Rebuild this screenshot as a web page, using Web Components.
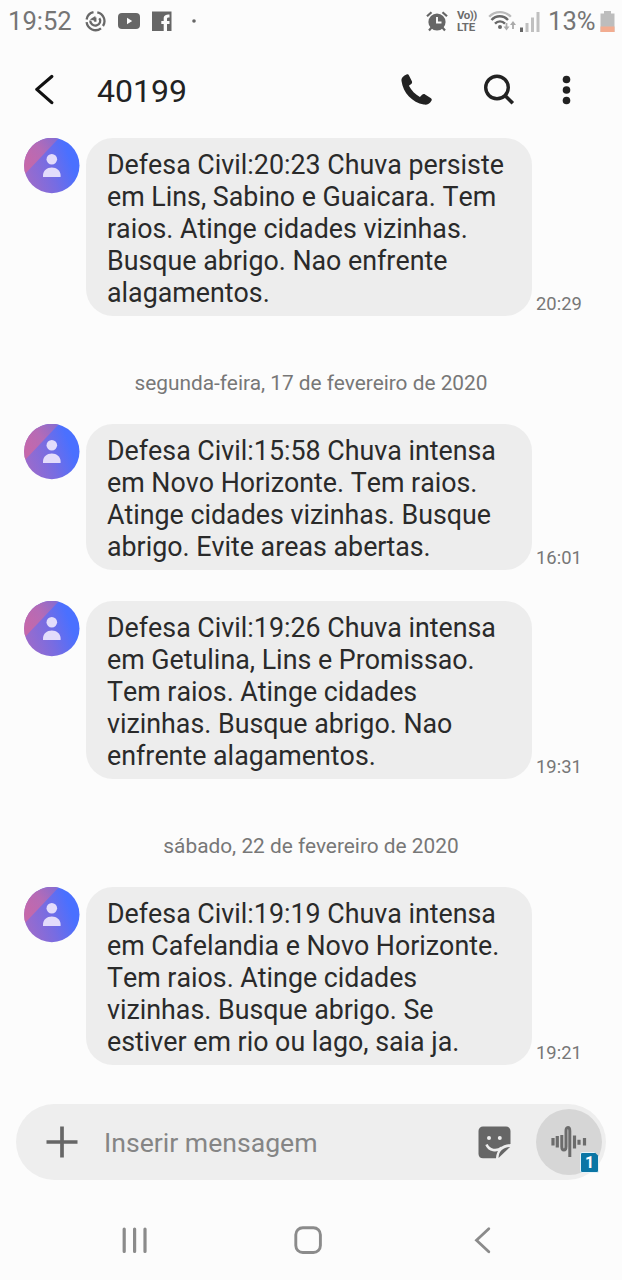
<!DOCTYPE html>
<html lang="pt-BR">
<head>
<meta charset="utf-8">
<title>40199</title>
<style>
  body {
    margin: 0;
    background: #fcfcfc;
    font-family: Roboto, "Liberation Sans", sans-serif;
  }
</style>
</head>
<body>
<phone-screen>
  <status-bar slot="status"></status-bar>
  <chat-header slot="header">40199</chat-header>

  <chat-message time="20:29">Defesa Civil:20:23 Chuva persiste<br>em Lins, Sabino e Guaicara. Tem<br>raios. Atinge cidades vizinhas.<br>Busque abrigo. Nao enfrente<br>alagamentos.</chat-message>
  <date-divider>segunda-feira, 17 de fevereiro de 2020</date-divider>
  <chat-message time="16:01">Defesa Civil:15:58 Chuva intensa<br>em Novo Horizonte. Tem raios.<br>Atinge cidades vizinhas. Busque<br>abrigo. Evite areas abertas.</chat-message>
  <chat-message time="19:31" class="next">Defesa Civil:19:26 Chuva intensa<br>em Getulina, Lins e Promissao.<br>Tem raios. Atinge cidades<br>vizinhas. Busque abrigo. Nao<br>enfrente alagamentos.</chat-message>
  <date-divider>sábado, 22 de fevereiro de 2020</date-divider>
  <chat-message time="19:21">Defesa Civil:19:19 Chuva intensa<br>em Cafelandia e Novo Horizonte.<br>Tem raios. Atinge cidades<br>vizinhas. Busque abrigo. Se<br>estiver em rio ou lago, saia ja.</chat-message>

  <message-composer slot="composer">Inserir mensagem</message-composer>
  <nav-bar slot="nav"></nav-bar>
</phone-screen>

<script>
class PhoneScreen extends HTMLElement {
  constructor() {
    super();
    this.attachShadow({ mode: "open" });
    this.shadowRoot.innerHTML = `
      <style>
        :host {
          display: flex;
          flex-direction: column;
          width: 622px;
          height: 1280px;
          overflow: hidden;
          background: #fcfcfc;
        }
        main {
          flex: 1;
          display: flex;
          flex-direction: column;
        }
      </style>
      <slot name="status"></slot>
      <slot name="header"></slot>
      <main><slot></slot></main>
      <slot name="composer"></slot>
      <slot name="nav"></slot>
    `;
  }
}

class StatusBar extends HTMLElement {
  constructor() {
    super();
    this.attachShadow({ mode: "open" });
    this.shadowRoot.innerHTML = `
      <style>
        :host {
          display: flex;
          align-items: center;
          justify-content: space-between;
          height: 42px;
          padding: 0 7px 0 8px;
          box-sizing: border-box;
          color: #757575;
          font-size: 25.6px;
          line-height: 44px;
        }
        .group { display: flex; align-items: center; }
        svg { display: block; }
        .clock { width: 77px; }
        .volte {
          display: flex;
          flex-direction: column;
          width: 23px;
          margin-left: 9px;
          font-size: 11.5px;
          font-weight: 700;
          line-height: 12px;
          letter-spacing: -0.2px;
          color: #6c6c6c;
        }
        .volte .vo { letter-spacing: -0.5px; }
        .percent { width: 52px; margin-left: 8px; white-space: nowrap; }
      </style>
      <div class="group">
        <span class="clock">19:52</span>
        <svg width="21" height="22" viewBox="0 0 21 22" fill="none" stroke="#686868" stroke-width="2.3">
          <path d="M8.500 2.200A9 9 0 0 0 1.600 9.500M1.600 12.200A9 9 0 0 0 16 18.300M18 16A9 9 0 0 0 12.300 2.300"/>
          <path d="M5.300 10.500a5 4.600 0 1 0 9-2.300M10.300 11.800V7.500"/>
          <path d="M4.800 9.500l5.500-3.500.5 5z" fill="#686868" stroke="none"/>
        </svg>
        <svg width="22" height="16" viewBox="0 0 22 16" style="margin-left:12px">
          <rect width="22" height="16" rx="4" fill="#666"/>
          <path d="M9 4.800v6.400l5.200-3.200z" fill="#fff"/>
        </svg>
        <svg width="20" height="20" viewBox="0 0 20 20" style="margin-left:12px">
          <path d="M0 .5h19.500V20H15v-7h2.500v-3H15V8c0-1.200.5-1.500 2.500-1.500v-3c-4 0-5.800 1-5.800 4V10H9.300v3h2.400v7H0z" fill="#666"/>
        </svg>
        <svg width="4" height="4" viewBox="0 0 4 4" style="margin-left:20px"><circle cx="2" cy="2" r="1.8" fill="#666"/></svg>
      </div>
      <div class="group">
        <svg width="22" height="21" viewBox="0 0 22 21">
          <circle cx="11" cy="11" r="8.600" fill="#666"/>
          <path d="M1 5.300L5.500 1.200M21 5.300l-4.500-4.100M5.600 16.500l-2.600 3M16.400 16.500l2.600 3" stroke="#666" stroke-width="2.200"/>
          <path d="M11 6v5.500h4.500" fill="none" stroke="#fcfcfc" stroke-width="1.900"/>
        </svg>
        <div class="volte"><span class="vo">Vo))</span><span>LTE</span></div>
        <svg width="28" height="22" viewBox="0 0 28 22" fill="none" style="margin-left:8px">
          <path d="M1.200 6.800C7 .5 17 .5 22.800 6.800" stroke="#bbb" stroke-width="2.400"/>
          <path d="M3.500 10c4.500-5 12-5 16.500 0M7 13.600c2.800-3 7.200-3 10 0" stroke="#686868" stroke-width="2.400"/>
          <circle cx="12" cy="17" r="2" fill="#686868"/>
          <path d="M18.500 13v5M25 19v-5" stroke="#aaa" stroke-width="1.800"/>
          <path d="M15.500 16.500h6l-3 4zM22 15h6l-3-4z" fill="#aaa"/>
        </svg>
        <svg width="20" height="21" viewBox="0 0 20 21" style="margin-left:4px">
          <path d="M0 16.500h3V21H0z" fill="#666"/>
          <path d="M5.500 12h3v9h-3zM11 6.500h3V21h-3zM16.500 1h3v20h-3z" fill="#c0c0c0"/>
        </svg>
        <span class="percent">13%</span>
        <svg width="15" height="21" viewBox="0 0 15 21">
          <path d="M4 0h7v2.500h3.500V21H.5V2.500H4z" fill="#bdbdbd"/>
          <path d="M.5 15.500h14V21H.5z" fill="#f2ac90"/>
        </svg>
      </div>
    `;
  }
}

class ChatHeader extends HTMLElement {
  constructor() {
    super();
    this.attachShadow({ mode: "open" });
    this.shadowRoot.innerHTML = `
      <style>
        :host {
          display: flex;
          align-items: center;
          height: 96px;
          padding: 0 50px 0 34px;
          box-sizing: border-box;
          color: #222;
        }
        svg { display: block; }
        .title {
          flex: 1;
          margin-left: 43px;
          font-size: 32px;
          line-height: 38px;
          padding-top: 2px;
        }
        .actions { display: flex; align-items: center; }
      </style>
      <svg width="20" height="32" viewBox="0 0 20 32" fill="none" stroke="#111" stroke-width="3.200" stroke-linecap="round" stroke-linejoin="round">
        <path d="M17.800 2.500L2.800 15.400l15 13.200"/>
      </svg>
      <span class="title"><slot></slot></span>
      <div class="actions">
        <svg width="32" height="32" viewBox="0 0 32 32" fill="#222">
          <path d="M6.200 1.200C3.500 2.500.800 4.500 1.200 7.500 2.800 19.500 12 28.800 23.500 31.200c3 .6 5.700-.5 7.800-4.200.5-1-.1-1.700-1-2.300l-5.500-3.700c-1-.6-2.200-.4-3 .4l-2.200 2.200C15 21.200 11 17 8.600 12.400l2.300-1.800c.9-.7 1.100-1.700.7-2.800L8.700 2C8.200 1 7.400.7 6.200 1.200z" transform="translate(-.7 -.6)"/>
        </svg>
        <svg width="32" height="32" viewBox="0 0 32 32" fill="none" stroke="#222" style="margin-left:50px">
          <circle cx="14" cy="13.500" r="11.300" stroke-width="3.400"/>
          <path d="M21.500 21l8.300 8.300" stroke-width="3.600"/>
        </svg>
        <svg width="10" height="32" viewBox="0 0 10 32" fill="#222" style="margin-left:47px">
          <circle cx="4.500" cy="5.500" r="3.800"/><circle cx="4.500" cy="16" r="3.800"/><circle cx="4.500" cy="26.500" r="3.800"/>
        </svg>
      </div>
    `;
  }
}

class ChatMessage extends HTMLElement {
  constructor() {
    super();
    this.attachShadow({ mode: "open" });
    this.shadowRoot.innerHTML = `
      <style>
        :host {
          display: flex;
          align-items: flex-start;
          padding-left: 24px;
        }
        :host(.next) { margin-top: 31px; }
        .avatar { display: block; width: 56px; height: 56px; flex: none; }
        .bubble {
          width: 446px;
          margin-left: 6px;
          padding: 11px 0 7px 21px;
          box-sizing: border-box;
          border-radius: 27px;
          background: #ededed;
          color: #2a2a2a;
          font-size: 26.8px;
          font-kerning: none;
          line-height: 32px;
          white-space: nowrap;
        }
        time {
          align-self: flex-end;
          margin-left: 4px;
          font-size: 18.4px;
          line-height: 25px;
          color: #777;
        }
      </style>
      <svg class="avatar" viewBox="0 0 56 56">
        <defs>
          <linearGradient id="base" x1="0" y1=".75" x2=".85" y2=".45">
            <stop offset="0" stop-color="#a06bc8"/>
            <stop offset=".55" stop-color="#776ce2"/>
            <stop offset="1" stop-color="#4a70ff"/>
          </linearGradient>
          <linearGradient id="edge" gradientUnits="userSpaceOnUse" x1="3" y1="26" x2="34" y2="5">
            <stop offset="0" stop-color="#c568aa"/>
            <stop offset=".5" stop-color="#b56bb6"/>
            <stop offset="1" stop-color="#8a6cce"/>
          </linearGradient>
          <clipPath id="disc"><circle cx="27.800" cy="27.500" r="27.700"/></clipPath>
        </defs>
        <g clip-path="url(#disc)">
          <path d="M0 0h56v56H0z" fill="url(#base)"/>
          <path d="M0 0h35L0 37z" fill="url(#edge)"/>
        </g>
        <circle cx="27.800" cy="21.300" r="5.300" fill="#e3dcfb"/>
        <path d="M19 39v-1.500c0-5 4-8 8.800-8s8.800 3 8.800 8V39z" fill="#e3dcfb"/>
      </svg>
      <div class="bubble"><slot></slot></div>
      <time></time>
    `;
  }

  connectedCallback() {
    this.shadowRoot.querySelector("time").textContent = this.getAttribute("time");
  }
}

class DateDivider extends HTMLElement {
  constructor() {
    super();
    this.attachShadow({ mode: "open" });
    this.shadowRoot.innerHTML = `
      <style>
        :host {
          display: block;
          height: 108px;
          padding-top: 55px;
          box-sizing: border-box;
          text-align: center;
          font-size: 20.85px;
          line-height: 24px;
          color: #777;
        }
      </style>
      <slot></slot>
    `;
  }
}

class MessageComposer extends HTMLElement {
  constructor() {
    super();
    this.attachShadow({ mode: "open" });
    this.shadowRoot.innerHTML = `
      <style>
        :host {
          display: flex;
          align-items: center;
          height: 76px;
          margin: 0 16px;
          padding: 0 4px 0 30px;
          box-sizing: border-box;
          border-radius: 38px;
          background: #eee;
        }
        svg { display: block; }
        .placeholder {
          flex: 1;
          margin-left: 26px;
          padding-top: 2px;
          font-size: 26.6px;
          line-height: 32px;
          color: #858585;
        }
        .voice {
          position: relative;
          display: flex;
          align-items: center;
          justify-content: center;
          width: 66px;
          height: 66px;
          margin-left: 25px;
          border-radius: 50%;
          background: #d6d6d6;
        }
        .sim {
          position: absolute;
          left: 44px;
          top: 43px;
          width: 17px;
          height: 19px;
          border: 1px solid #e6f2f8;
          background: #0b76a5;
          border-radius: 2px;
          clip-path: polygon(0 0, 76% 0, 100% 22%, 100% 100%, 0 100%);
          color: #fff;
          font-size: 16px;
          font-weight: 700;
          line-height: 20px;
          text-align: center;
        }
      </style>
      <svg width="32" height="32" viewBox="0 0 32 32" stroke="#666" stroke-width="3.700">
        <path d="M16 .5v31M.5 16h31"/>
      </svg>
      <span class="placeholder"><slot></slot></span>
      <svg width="33" height="33" viewBox="0 0 33 33">
        <path d="M5 .5h23a4.500 4.500 0 0 1 4.500 4.500v13c-5 .5-8 1.500-10.500 4.200-2.500 2.600-3.800 6-4 10H5A4.500 4.500 0 0 1 .5 28V5A4.500 4.500 0 0 1 5 .5z" fill="#666"/>
        <circle cx="11" cy="12" r="2" fill="#eee"/><circle cx="21.800" cy="12" r="2" fill="#eee"/>
        <path d="M8.500 18.500c2.500 6 10 7.500 15.500 3" fill="none" stroke="#eee" stroke-width="2.600"/>
        <path d="M20.500 32c.2-6.500 4-10.500 11.500-11z" fill="#666"/>
      </svg>
      <div class="voice">
        <svg width="36" height="34" viewBox="0 0 36 34" fill="none" stroke="#6c6c6c" stroke-width="3.200">
          <path d="M2 13v7.500M6.300 11v11.500M23.500 10.500v13M28 14.800v5M33.500 13v7.500"/>
          <path d="M10.800 10v11.500c0 4.800 4.200 4.800 4.200 0V6c0-4.800 3.800-4.800 3.800 0v26" stroke-width="3"/>
        </svg>
        <div class="sim">1</div>
      </div>
    `;
  }
}

class NavBar extends HTMLElement {
  constructor() {
    super();
    this.attachShadow({ mode: "open" });
    this.shadowRoot.innerHTML = `
      <style>
        :host {
          display: flex;
          align-items: center;
          height: 100px;
          padding: 20px 0 0 121px;
          box-sizing: border-box;
        }
        svg { display: block; }
      </style>
      <svg width="27" height="28" viewBox="0 0 27 28" stroke="#8b8b8b" stroke-width="3.200" stroke-linecap="round">
        <path d="M3.200 3v22.500M13.600 3v22.500M24 3v22.500"/>
      </svg>
      <svg width="28" height="28" viewBox="0 0 28 28" fill="none" stroke="#8b8b8b" stroke-width="2.900" style="margin-left:146px">
        <rect x="1.800" y="1.700" width="24.600" height="24.800" rx="7"/>
      </svg>
      <svg width="18" height="28" viewBox="0 0 18 28" fill="none" stroke="#8b8b8b" stroke-width="2.800" stroke-linecap="round" style="margin-left:152px">
        <path d="M14.800 2.800L2.500 14.200l12.300 11.500"/>
      </svg>
    `;
  }
}

customElements.define("phone-screen", PhoneScreen);
customElements.define("status-bar", StatusBar);
customElements.define("chat-header", ChatHeader);
customElements.define("chat-message", ChatMessage);
customElements.define("date-divider", DateDivider);
customElements.define("message-composer", MessageComposer);
customElements.define("nav-bar", NavBar);
</script>
</body>
</html>
